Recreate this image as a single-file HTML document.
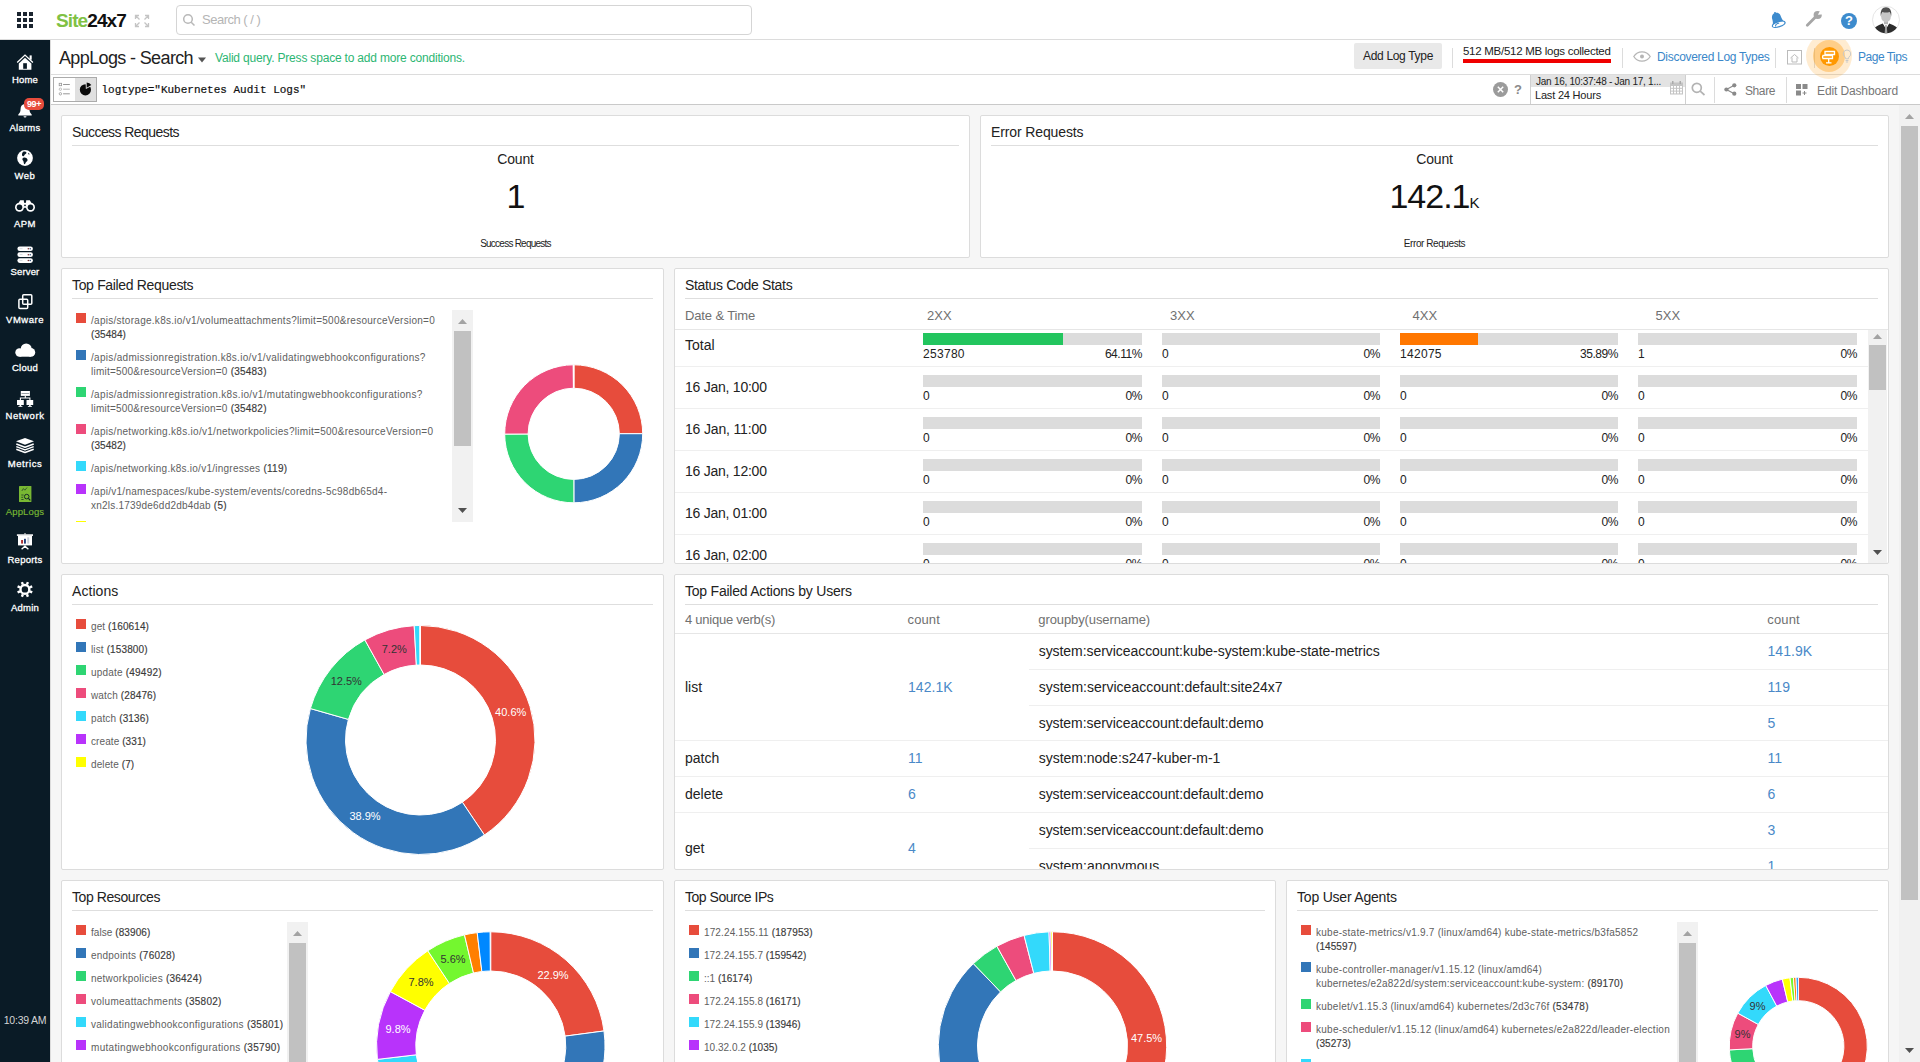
<!DOCTYPE html>
<html lang="en"><head><meta charset="utf-8"><title>AppLogs - Search</title>
<style>
html,body{margin:0;padding:0}
body{width:1920px;height:1062px;overflow:hidden;position:relative;background:#f6f6f6;font-family:'Liberation Sans', sans-serif;color:#333}
.t{position:absolute;white-space:nowrap}
.b{position:absolute}
.panel{position:absolute;background:#fff;border:1px solid #dcdcdc;border-radius:2px;box-sizing:border-box;overflow:hidden}
.panel .hd{position:absolute;left:10px;right:10px;top:29px;height:1px;background:#dedede}
svg{position:absolute;overflow:visible}
svg text{font-family:'Liberation Sans', sans-serif}
.lg{position:absolute;font-size:10px;line-height:14px;color:#606060;letter-spacing:0.3px}
.lg b{font-weight:normal;color:#3a3a3a;-webkit-text-stroke:0.15px #3a3a3a}
.sw{position:absolute;width:10px;height:10px}
</style></head><body>

<div class="b" style="left:0;top:0;width:1920px;height:39px;background:#fff;border-bottom:1px solid #dcdcdc"></div>
<svg width="60" height="40" style="left:0;top:0"><rect x="17" y="12" width="4" height="4" fill="#1b2530"/><rect x="23" y="12" width="4" height="4" fill="#1b2530"/><rect x="29" y="12" width="4" height="4" fill="#1b2530"/><rect x="17" y="18" width="4" height="4" fill="#1b2530"/><rect x="23" y="18" width="4" height="4" fill="#1b2530"/><rect x="29" y="18" width="4" height="4" fill="#1b2530"/><rect x="17" y="24" width="4" height="4" fill="#1b2530"/><rect x="23" y="24" width="4" height="4" fill="#1b2530"/><rect x="29" y="24" width="4" height="4" fill="#1b2530"/></svg>
<div class="t" style="left:56px;top:9px;font-size:19px;line-height:24px;color:#333;letter-spacing:-0.9px;font-weight:bold;"><span style="color:#80c144">Site</span><span style="color:#111">24x7</span></div>
<svg width="16" height="14" style="left:134px;top:14px" viewBox="0 0 16 14" fill="none" stroke="#c4c4c4" stroke-width="1.3">
<path d="M1.5 5V1.5H5M1.5 1.5L5.5 5.5M11 1.5h3.5V5M14.5 1.5L10.5 5.5M1.5 9v3.5H5M1.5 12.5L5.5 8.5M11 12.5h3.5V9M14.5 12.5L10.5 8.5"/></svg>
<div class="b" style="left:176px;top:5px;width:574px;height:28px;border:1px solid #d5d5d5;border-radius:4px;background:#fff"></div>
<svg width="14" height="14" style="left:182px;top:13px" viewBox="0 0 14 14" fill="none" stroke="#b8b8b8" stroke-width="1.5"><circle cx="6" cy="6" r="4.3"/><path d="M9.2 9.2L12.5 12.5"/></svg>
<div class="t" style="left:202px;top:12px;font-size:13px;line-height:16px;color:#b5b5b5;letter-spacing:-0.5px;">Search ( / )</div>
<svg width="20" height="20" style="left:1769px;top:11px" viewBox="0 0 20 20">
<g transform="translate(9.700 13.300) rotate(-18) translate(0 -5.300)">
<circle cx="0" cy="-6.600" r="1" fill="#3d8bcd"/>
<path d="M-6.800 5.300C-5.200 3.300-4.500 1-4.500-1.800C-4.500-4.800-2.600-6.500 0-6.500C2.600-6.500 4.500-4.800 4.500-1.800C4.500 1 5.200 3.300 6.800 5.300z" fill="#3d8bcd"/>
<ellipse cx="0" cy="5.300" rx="6.600" ry="2.500" fill="#fff" stroke="#3d8bcd" stroke-width="1.200"/>
<path d="M-3.500 5.900c.3-1.300 2.300-1.900 3.900-1.500" fill="none" stroke="#3d8bcd" stroke-width="1.100" stroke-linecap="round"/>
</g></svg>
<svg width="20" height="18" style="left:1804px;top:10px" viewBox="0 0 20 18">
<path d="M3.300 15.300L12 6.600" stroke="#a6a6a6" stroke-width="2.800" stroke-linecap="round" fill="none"/>
<circle cx="13.700" cy="5" r="4.100" fill="#a6a6a6"/>
<path d="M13.900 4.800L16.700 -.4L20 4.200z" fill="#fff"/>
</svg>
<div class="b" style="left:1841px;top:13px;width:16px;height:16px;border-radius:50%;background:#3d8bcd"></div>
<div class="t" style="left:1841px;top:13px;font-size:13px;line-height:16px;color:#fff;width:16px;text-align:center;font-weight:bold;">?</div>
<svg width="28" height="28" style="left:1872px;top:6px" viewBox="0 0 28 28">
<defs><clipPath id="av"><circle cx="14" cy="13.750" r="13.400"/></clipPath></defs>
<circle cx="14" cy="13.750" r="13.500" fill="#fff" stroke="#dedede" stroke-width=".8"/>
<g clip-path="url(#av)">
<path d="M0 29C0 21.500 5.500 19.800 10.800 17.600L14 22.500L17.200 17.600C22.500 19.800 28 21.500 28 29z" fill="#2c2c2c"/>
<path d="M11.300 17.400L14 23L16.700 17.400z" fill="#fff"/>
<path d="M13.300 19h1.400l.7 9h-2.800z" fill="#9c9c9c"/>
<rect x="12" y="14" width="4" height="4.200" fill="#b4b4b4"/>
<ellipse cx="14" cy="10.300" rx="4.900" ry="6.100" fill="#c6c6c6"/>
<path d="M8.900 10.500C7.800 4.500 10.500 1.300 14 1.300s6.300 3.200 5.100 9.200c-.3-2.600-1-4.300-1.700-4.600-2.200.7-4.600.7-6.800 0-.7.300-1.400 2-1.700 4.600z" fill="#505050"/>
</g></svg>
<div class="b" style="left:0;top:40px;width:50px;height:1022px;background:#0a1b26"></div>
<svg width="30" height="22" viewBox="10 12 30 22" style="left:10px;top:52px"><path d="M17.2 22.500L25 15.100L32.900 22.500" stroke="#fff" stroke-width="1.300" fill="none"/><path d="M18.800 29.800V23.600L25 17.700L31.400 23.600V29.800z" fill="#fff"/><rect x="23.200" y="23.200" width="3.700" height="5.600" fill="#0a1b26"/><rect x="29.600" y="15.400" width="2.100" height="4.300" fill="#fff"/></svg>
<div class="t" style="left:0px;top:74px;font-size:9.5px;line-height:12px;color:#fff;letter-spacing:0.164px;width:50px;text-align:center;-webkit-text-stroke:0.3px #fff;">Home</div>
<svg width="30" height="22" viewBox="10 12 30 22" style="left:10px;top:100px"><path d="M25 16c-3 0-4.400 2.200-4.400 4.800 0 3.400-1.200 4.700-2.300 5.700v.9h13.400v-.9c-1.100-1-2.300-2.300-2.300-5.700 0-2.600-1.400-4.800-4.400-4.800z" fill="#fff"/><path d="M23.500 28.200a1.500 1.300 0 003 0z" fill="#fff"/></svg>
<div class="t" style="left:0px;top:122px;font-size:9.5px;line-height:12px;color:#fff;letter-spacing:0.24px;width:50px;text-align:center;-webkit-text-stroke:0.3px #fff;">Alarms</div>
<svg width="30" height="22" viewBox="10 12 30 22" style="left:10px;top:148px"><circle cx="25" cy="22" r="7.900" fill="#fff"/><path d="M23.200 15.800c1.300-.5 2.700-.1 3.200.8.400.9-.6 1.400-1.500 2-.8.600-.5 1.600-1.500 1.700-1 .1-1.500-.9-1.400-2 .1-1 .500-2.100 1.200-2.500zM24 21.500c1.400-.3 3.100.6 3.500 1.900.4 1.300-1 2-1.700 3.100-.5.800-.7 1.900-1.400 1.700-.7-.2-.6-1.600-.9-2.600-.3-1-1.300-1.400-1.100-2.500.1-.8.800-1.500 1.600-1.600z" fill="#0a1b26"/><path d="M28.300 16.800c.7.400 1.200 1 1.400 1.600l-1.500-.1z" fill="#0a1b26"/></svg>
<div class="t" style="left:0px;top:170px;font-size:9.5px;line-height:12px;color:#fff;letter-spacing:0.475px;width:50px;text-align:center;-webkit-text-stroke:0.3px #fff;">Web</div>
<svg width="30" height="22" viewBox="10 12 30 22" style="left:10px;top:196px"><path d="M17 21.500L20.200 16.300h3.600L24.300 22zM33 21.500L29.800 16.300h-3.600L25.700 22z" fill="#fff"/><rect x="23.300" y="18.800" width="3.400" height="5" fill="#fff"/><circle cx="19.500" cy="23.300" r="4.500" fill="#fff"/><circle cx="30.500" cy="23.300" r="4.500" fill="#fff"/><circle cx="19.500" cy="23.300" r="2.800" fill="#0a1b26"/><circle cx="30.500" cy="23.300" r="2.800" fill="#0a1b26"/><circle cx="25" cy="21.300" r=".9" fill="#0a1b26"/></svg>
<div class="t" style="left:0px;top:218px;font-size:9.5px;line-height:12px;color:#fff;letter-spacing:0.469px;width:50px;text-align:center;-webkit-text-stroke:0.3px #fff;">APM</div>
<svg width="30" height="22" viewBox="10 12 30 22" style="left:10px;top:244px"><rect x="17.400" y="14.4" width="15.500" height="4.700" rx="2.300" fill="#fff"/><rect x="19.500" y="16.4" width="3" height=".7" fill="#c8d0d6"/><circle cx="28.300" cy="16.75" r=".75" fill="#7a2a2a"/><circle cx="30.200" cy="16.75" r=".75" fill="#1c3f6e"/><rect x="17.400" y="20.3" width="15.500" height="4.700" rx="2.300" fill="#fff"/><rect x="19.500" y="22.3" width="3" height=".7" fill="#c8d0d6"/><circle cx="28.300" cy="22.650000000000002" r=".75" fill="#7a2a2a"/><circle cx="30.200" cy="22.650000000000002" r=".75" fill="#1c3f6e"/><rect x="17.400" y="26.2" width="15.500" height="4.700" rx="2.300" fill="#fff"/><rect x="19.500" y="28.2" width="3" height=".7" fill="#c8d0d6"/><circle cx="28.300" cy="28.55" r=".75" fill="#7a2a2a"/><circle cx="30.200" cy="28.55" r=".75" fill="#1c3f6e"/></svg>
<div class="t" style="left:0px;top:266px;font-size:9.5px;line-height:12px;color:#fff;letter-spacing:0.136px;width:50px;text-align:center;-webkit-text-stroke:0.3px #fff;">Server</div>
<svg width="30" height="22" viewBox="10 12 30 22" style="left:10px;top:292px"><rect x="22.700" y="14.800" width="9.100" height="9.400" rx="1" fill="none" stroke="#fff" stroke-width="1.500"/><rect x="18.900" y="19.200" width="8.800" height="9.200" rx="1" fill="none" stroke="#fff" stroke-width="1.500"/></svg>
<div class="t" style="left:0px;top:314px;font-size:9.5px;line-height:12px;color:#fff;letter-spacing:0.509px;width:50px;text-align:center;-webkit-text-stroke:0.3px #fff;">VMware</div>
<svg width="30" height="22" viewBox="10 12 30 22" style="left:10px;top:340px"><circle cx="26.200" cy="21" r="5.500" fill="#fff"/><circle cx="19.500" cy="24.500" r="4.200" fill="#fff"/><circle cx="30.900" cy="24.400" r="4.300" fill="#fff"/><rect x="19.500" y="22" width="11.400" height="6.700" fill="#fff"/></svg>
<div class="t" style="left:0px;top:362px;font-size:9.5px;line-height:12px;color:#fff;letter-spacing:0.234px;width:50px;text-align:center;-webkit-text-stroke:0.3px #fff;">Cloud</div>
<svg width="30" height="22" viewBox="10 12 30 22" style="left:10px;top:388px"><rect x="20.800" y="15" width="9.100" height="4.900" fill="#fff"/><rect x="21.500" y="17.100" width="7.700" height=".7" fill="#0a1b26" opacity=".6"/><path d="M25.300 19.900V22M20.400 24V22h9.500v2" stroke="#fff" stroke-width="1.100" fill="none"/><rect x="17" y="24" width="6.800" height="5" fill="#fff"/><rect x="26.500" y="24" width="6.700" height="5" fill="#fff"/><rect x="19.600" y="29" width="1.600" height="1.200" fill="#fff"/><rect x="29.100" y="29" width="1.600" height="1.200" fill="#fff"/><rect x="18.400" y="30.100" width="4" height=".8" fill="#fff"/><rect x="27.900" y="30.100" width="4" height=".8" fill="#fff"/></svg>
<div class="t" style="left:0px;top:410px;font-size:9.5px;line-height:12px;color:#fff;letter-spacing:0.594px;width:50px;text-align:center;-webkit-text-stroke:0.3px #fff;">Network</div>
<svg width="30" height="22" viewBox="10 12 30 22" style="left:10px;top:436px"><path d="M25 13.900L34 17.300L25 20.700L16 17.300z" fill="#fff"/><path d="M16.300 20L25 23.300L33.700 20M16.300 22.600L25 25.900L33.700 22.600M16.300 25.200L25 28.500L33.700 25.200" fill="none" stroke="#fff" stroke-width="1.500" stroke-linejoin="round"/></svg>
<div class="t" style="left:0px;top:458px;font-size:9.5px;line-height:12px;color:#fff;letter-spacing:0.554px;width:50px;text-align:center;-webkit-text-stroke:0.3px #fff;">Metrics</div>
<svg width="30" height="22" viewBox="10 12 30 22" style="left:10px;top:484px"><rect x="19" y="13.900" width="12.400" height="16.100" rx=".6" fill="#78b833"/><path d="M21.800 19l1.600-2.400 1.500 1.600 2.200-2.700" fill="none" stroke="#0a1b26" stroke-width=".7" opacity=".8"/><path d="M21.300 23h2.300M21.300 25.300h1.800M21.300 27.500h2.300" stroke="#0a1b26" stroke-width=".8" opacity=".8"/><circle cx="26.700" cy="24.600" r="2.300" fill="none" stroke="#0a1b26" stroke-width=".9"/><path d="M28.400 26.400l1.900 2" stroke="#0a1b26" stroke-width="1.100"/></svg>
<div class="t" style="left:0px;top:506px;font-size:9.5px;line-height:12px;color:#78b833;letter-spacing:0.126px;width:50px;text-align:center;-webkit-text-stroke:0.15px #78b833;">AppLogs</div>
<svg width="30" height="22" viewBox="10 12 30 22" style="left:10px;top:532px"><rect x="24.500" y="13" width="1" height="1.500" fill="#fff"/><rect x="16.900" y="14.300" width="16.100" height="1.600" fill="#fff"/><rect x="18" y="15.800" width="14" height="9.600" fill="#fff"/><rect x="21.100" y="20" width="1.900" height="3.600" fill="#b03030"/><rect x="24" y="18.800" width="1.900" height="4.800" fill="#24407a"/><rect x="27.300" y="17.300" width="1.900" height="6.300" fill="#c9ccd6"/><path d="M25 25.400v1.600M21.600 29.300l3.400-3 3.400 3" fill="none" stroke="#fff" stroke-width="1.400"/></svg>
<div class="t" style="left:0px;top:554px;font-size:9.5px;line-height:12px;color:#fff;letter-spacing:0.248px;width:50px;text-align:center;-webkit-text-stroke:0.3px #fff;">Reports</div>
<svg width="30" height="22" viewBox="10 12 30 22" style="left:10px;top:580px"><path d="M29.70 23.39L32.20 24.42" stroke="#fff" stroke-width="2.400"/><path d="M26.89 26.20L27.92 28.70" stroke="#fff" stroke-width="2.400"/><path d="M22.91 26.20L21.88 28.70" stroke="#fff" stroke-width="2.400"/><path d="M20.10 23.39L17.60 24.42" stroke="#fff" stroke-width="2.400"/><path d="M20.10 19.41L17.60 18.38" stroke="#fff" stroke-width="2.400"/><path d="M22.91 16.60L21.88 14.10" stroke="#fff" stroke-width="2.400"/><path d="M26.89 16.60L27.92 14.10" stroke="#fff" stroke-width="2.400"/><path d="M29.70 19.41L32.20 18.38" stroke="#fff" stroke-width="2.400"/><circle cx="24.900" cy="21.400" r="4.400" fill="none" stroke="#fff" stroke-width="2.400"/></svg>
<div class="t" style="left:0px;top:602px;font-size:9.5px;line-height:12px;color:#fff;letter-spacing:0.252px;width:50px;text-align:center;-webkit-text-stroke:0.3px #fff;">Admin</div>
<div class="b" style="left:24px;top:98px;width:20px;height:12px;border-radius:5px;background:#e74c3c"></div>
<div class="t" style="left:24px;top:98px;font-size:9px;line-height:12px;color:#fff;letter-spacing:-0.4px;width:20px;text-align:center;font-weight:bold;">99+</div>
<div class="t" style="left:0px;top:1014px;font-size:10.5px;line-height:13px;color:#d5d5d5;letter-spacing:-0.234px;width:50px;text-align:center;">10:39 AM</div>
<div class="b" style="left:50px;top:40px;width:1870px;height:34px;background:#fff;border-bottom:1px solid #dcdcdc"></div>
<div class="t" style="left:59px;top:47px;font-size:18px;line-height:22px;color:#222;letter-spacing:-0.631px;">AppLogs - Search</div>
<svg width="10" height="6" style="left:197px;top:57px" viewBox="0 0 10 6"><path d="M1 .5h8L5 5.500z" fill="#555"/></svg>
<div class="t" style="left:215px;top:51px;font-size:12px;line-height:15px;color:#2cb673;letter-spacing:-0.188px;">Valid query. Press space to add more conditions.</div>
<div class="b" style="left:1354px;top:43px;width:88px;height:26px;background:#e9e9e9;border-radius:2px"></div>
<div class="t" style="left:1354px;top:49px;font-size:12px;line-height:15px;color:#222;letter-spacing:-0.32px;width:88px;text-align:center;">Add Log Type</div>
<div class="b" style="left:1452px;top:48px;width:1px;height:20px;background:#dcdcdc;"></div>
<div class="t" style="left:1463px;top:44px;font-size:11.5px;line-height:15px;color:#222;letter-spacing:-0.277px;">512 MB/512 MB logs collected</div>
<div class="b" style="left:1463px;top:59px;width:148px;height:4px;background:#f00000;"></div>
<div class="b" style="left:1622px;top:48px;width:1px;height:20px;background:#dcdcdc;"></div>
<svg width="18" height="11" style="left:1633px;top:51px" viewBox="0 0 18 11" fill="none" stroke="#b5b5b5" stroke-width="1.300"><path d="M.8 5.500C3 2 6 .8 9 .8s6 1.200 8.200 4.700C15 9 12 10.200 9 10.200S3 9 .8 5.500z"/><circle cx="9" cy="5.500" r="2" fill="#b5b5b5" stroke="none"/></svg>
<div class="t" style="left:1657px;top:50px;font-size:12px;line-height:15px;color:#3a87c9;letter-spacing:-0.301px;">Discovered Log Types</div>
<div class="b" style="left:1775px;top:48px;width:1px;height:20px;background:#dcdcdc;"></div>
<svg width="15" height="15" style="left:1787px;top:50px" viewBox="0 0 15 15" fill="none" stroke="#bbb" stroke-width="1"><rect x=".5" y=".5" width="14" height="13.500"/><path d="M3.500 8L7.500 4.500 11.500 8M5 7.500V12h5V7.500"/></svg>
<div class="b" style="left:1814px;top:48px;width:1px;height:20px;background:#dcdcdc;"></div>
<div class="b" style="left:1800px;top:40px;width:60px;height:50px;overflow:hidden;z-index:5"><div class="b" style="left:6px;top:-7px;width:46px;height:46px;border-radius:50%;background:rgba(255,152,0,.18)"></div><div class="b" style="left:13px;top:0px;width:32px;height:32px;border-radius:50%;background:rgba(255,152,0,.35)"></div><div class="b" style="left:19.500px;top:6.500px;width:19px;height:19px;border-radius:50%;background:#ff9800"></div></div>
<svg width="14" height="14" style="left:1822px;top:50px;z-index:6" viewBox="0 0 14 14" fill="none" stroke="#fff" stroke-width="1.300"><path d="M3 1.500h9.500v3H3zM10.500 5.500H1l-.5 1.500.5 1.500h9.500zM6.700 9v3.500M4 12.800h5.500"/></svg>
<svg width="10" height="15" style="left:1842px;top:49px;z-index:6" viewBox="0 0 10 15" fill="none" stroke="#c9c9c9" stroke-width="1"><path d="M5 1a3.800 3.800 0 00-2 7c.4.400.6 1 .6 1.800h2.800c0-.8.200-1.400.6-1.800A3.800 3.800 0 005 1zM3.600 11.500h2.800M3.900 13h2.200"/></svg>
<div class="t" style="left:1858px;top:50px;font-size:12px;line-height:15px;color:#3a87c9;letter-spacing:-0.486px;">Page Tips</div>
<div class="b" style="left:50px;top:75px;width:1870px;height:29px;background:#fff;border-bottom:1px solid #c9c9c9"></div>
<div class="b" style="left:53px;top:77px;width:44px;height:25px;border:1px solid #ababab;box-sizing:border-box;background:#fff"></div>
<div class="b" style="left:75px;top:78px;width:21px;height:23px;background:#e0e0e0"></div>
<svg width="13" height="14" style="left:58px;top:82px" viewBox="0 0 13 14" fill="none" stroke="#979797" stroke-width="1"><path d="M5.100 2.500h6.700M5.100 11.800h6.700"/><path d="M5.100 7.200h6.700" stroke="#b5b5b5"/><rect x="1.200" y="1.300" width="2.400" height="2.400" stroke-width=".8"/><circle cx="2.400" cy="7.200" r="1.200" stroke-width=".8" stroke="#b0b0b0"/><circle cx="2.400" cy="11.800" r="1.200" stroke-width=".8"/></svg>
<svg width="16" height="16" style="left:78px;top:82px" viewBox="0 0 16 16"><circle cx="7.400" cy="7.800" r="5.600" fill="#0a0a0a"/><path d="M7.900 7L7.530 0H14.500L14.140 3.820z" fill="#e0e0e0"/><path d="M8.700 5.750L8.700 .45A5.300 5.300 0 0 1 13.290 3.100z" fill="#0a0a0a"/></svg>
<div class="t" style="left:101.5px;top:83px;font-size:11px;line-height:14px;color:#111;font-family:'Liberation Mono',monospace;-webkit-text-stroke:0.2px #111;">logtype="Kubernetes Audit Logs"</div>
<div class="b" style="left:1493px;top:82px;width:15px;height:15px;border-radius:50%;background:#9b9b9b"></div>
<svg width="15" height="15" style="left:1493px;top:82px" viewBox="0 0 15 15" stroke="#fff" stroke-width="1.500"><path d="M4.800 4.800l5.400 5.400M10.200 4.800l-5.400 5.400"/></svg>
<div class="t" style="left:1514px;top:81px;font-size:13px;line-height:17px;color:#8a8a8a;font-weight:bold;">?</div>
<div class="b" style="left:1530px;top:75px;width:156px;height:29px;border-left:1px solid #d0d0d0;border-right:1px solid #d0d0d0;box-sizing:border-box;background:#fff"></div>
<div class="b" style="left:1531px;top:75px;width:154px;height:12px;background:#e3e3e3;"></div>
<div class="t" style="left:1536px;top:76px;font-size:10px;line-height:12px;color:#222;letter-spacing:-0.254px;">Jan 16, 10:37:48 - Jan 17, 1...</div>
<div class="t" style="left:1535px;top:88px;font-size:11px;line-height:14px;color:#222;letter-spacing:-0.191px;">Last 24 Hours</div>
<svg width="13" height="14" style="left:1670px;top:81px" viewBox="0 0 13 14"><rect x="0" y="1.500" width="13" height="12" fill="#c4c4c4"/><rect x="2" y="0" width="1.500" height="3" fill="#aaa"/><rect x="9.500" y="0" width="1.500" height="3" fill="#aaa"/><rect x="1" y="5.0" width="2" height="1.800" fill="#fff"/><rect x="4" y="5.0" width="2" height="1.800" fill="#fff"/><rect x="7" y="5.0" width="2" height="1.800" fill="#fff"/><rect x="10" y="5.0" width="2" height="1.800" fill="#fff"/><rect x="1" y="7.8" width="2" height="1.800" fill="#fff"/><rect x="4" y="7.8" width="2" height="1.800" fill="#fff"/><rect x="7" y="7.8" width="2" height="1.800" fill="#fff"/><rect x="10" y="7.8" width="2" height="1.800" fill="#fff"/><rect x="1" y="10.6" width="2" height="1.800" fill="#fff"/><rect x="4" y="10.6" width="2" height="1.800" fill="#fff"/><rect x="7" y="10.6" width="2" height="1.800" fill="#fff"/><rect x="10" y="10.6" width="2" height="1.800" fill="#fff"/></svg>
<svg width="15" height="14" style="left:1691px;top:82px" viewBox="0 0 15 14" fill="none" stroke="#b3b3b3" stroke-width="1.700"><circle cx="5.800" cy="5.800" r="4.500"/><path d="M9.200 9.200L13.500 13"/></svg>
<div class="b" style="left:1714px;top:77px;width:1px;height:26px;background:#dcdcdc;"></div>
<svg width="13" height="13" style="left:1724px;top:83px" viewBox="0 0 13 13" fill="#8a8a8a"><circle cx="10.300" cy="2.300" r="2.100"/><circle cx="2.400" cy="6.500" r="2.100"/><circle cx="10.300" cy="10.700" r="2.100"/><path d="M2.400 6.500L10.300 2.300M2.400 6.500l7.900 4.200" stroke="#8a8a8a" stroke-width="1.200"/></svg>
<div class="t" style="left:1745px;top:84px;font-size:12px;line-height:15px;color:#777;letter-spacing:-0.406px;">Share</div>
<div class="b" style="left:1786px;top:77px;width:1px;height:26px;background:#dcdcdc;"></div>
<svg width="12" height="12" style="left:1796px;top:84px" viewBox="0 0 12 12" fill="#8a8a8a"><rect x="0" y="0" width="5" height="5"/><rect x="6.500" y="0" width="5" height="5"/><rect x="0" y="6.500" width="5" height="5"/><path d="M8.500 7v4M6.500 9h4" stroke="#8a8a8a" stroke-width="1"/></svg>
<div class="t" style="left:1817px;top:84px;font-size:12px;line-height:15px;color:#777;letter-spacing:-0.123px;">Edit Dashboard</div>
<div class="b" style="left:50px;top:40px;width:1px;height:1022px;background:#dcdcdc;z-index:3;"></div>
<div class="b" style="left:1899px;top:105px;width:21px;height:957px;background:#f1f1f1;"></div>
<svg width="9" height="5" style="left:1905px;top:114px" viewBox="0 0 9 5"><path d="M4.500 0L9 5H0z" fill="#a3a3a3"/></svg>
<div class="b" style="left:1901px;top:126px;width:17px;height:774px;background:#c1c1c1;"></div>
<svg width="9" height="5" style="left:1905px;top:1048px" viewBox="0 0 9 5"><path d="M0 0h9L4.500 5z" fill="#505050"/></svg>
<div class="panel" style="left:61px;top:115px;width:909px;height:143px">
<div class="t" style="left:10px;top:7px;font-size:14px;line-height:18px;color:#222;letter-spacing:-0.56px">Success Requests</div><div class="hd"></div>
<div class="t" style="left:0;width:907px;text-align:center;top:34px;font-size:14px;line-height:18px;color:#222;letter-spacing:-0.2px">Count</div>
<div class="t" style="left:0;width:907px;text-align:center;top:58px;font-size:34px;line-height:44px;color:#111;letter-spacing:-1px">1<span style="font-size:15px;letter-spacing:0"></span></div>
<div class="t" style="left:0;width:907px;text-align:center;top:122px;font-size:10px;line-height:12px;color:#222;letter-spacing:-0.758px">Success Requests</div>
</div>
<div class="panel" style="left:980px;top:115px;width:909px;height:143px">
<div class="t" style="left:10px;top:7px;font-size:14px;line-height:18px;color:#222;letter-spacing:-0.125px">Error Requests</div><div class="hd"></div>
<div class="t" style="left:0;width:907px;text-align:center;top:34px;font-size:14px;line-height:18px;color:#222;letter-spacing:-0.2px">Count</div>
<div class="t" style="left:0;width:907px;text-align:center;top:58px;font-size:34px;line-height:44px;color:#111;letter-spacing:-1px">142.1<span style="font-size:15px;letter-spacing:0">K</span></div>
<div class="t" style="left:0;width:907px;text-align:center;top:122px;font-size:10px;line-height:12px;color:#222;letter-spacing:-0.425px">Error Requests</div>
</div>
<div class="panel" style="left:61px;top:268px;width:603px;height:296px">
<div class="t" style="left:10px;top:7px;font-size:14px;line-height:18px;color:#222;letter-spacing:-0.334px">Top Failed Requests</div><div class="hd"></div>
<div class="sw" style="left:14px;top:44px;background:#e74c3c"></div>
<div class="lg" style="left:29px;top:45px;width:360px;white-space:nowrap"><span style="letter-spacing:0.273px">/apis/storage.k8s.io/v1/volumeattachments?limit=500&amp;resourceVersion=0</span><br><span style="letter-spacing:0.076px"><b>(35484)</b></span></div>
<div class="sw" style="left:14px;top:81px;background:#3276b8"></div>
<div class="lg" style="left:29px;top:82px;width:360px;white-space:nowrap"><span style="letter-spacing:0.303px">/apis/admissionregistration.k8s.io/v1/validatingwebhookconfigurations?</span><br><span style="letter-spacing:0.223px">limit=500&amp;resourceVersion=0 <b>(35483)</b></span></div>
<div class="sw" style="left:14px;top:118px;background:#2ed573"></div>
<div class="lg" style="left:29px;top:119px;width:360px;white-space:nowrap"><span style="letter-spacing:0.325px">/apis/admissionregistration.k8s.io/v1/mutatingwebhookconfigurations?</span><br><span style="letter-spacing:0.223px">limit=500&amp;resourceVersion=0 <b>(35482)</b></span></div>
<div class="sw" style="left:14px;top:155px;background:#ed4c7c"></div>
<div class="lg" style="left:29px;top:156px;width:360px;white-space:nowrap"><span style="letter-spacing:0.292px">/apis/networking.k8s.io/v1/networkpolicies?limit=500&amp;resourceVersion=0</span><br><span style="letter-spacing:0.076px"><b>(35482)</b></span></div>
<div class="sw" style="left:14px;top:192px;background:#33d9fb"></div>
<div class="lg" style="left:29px;top:193px;width:360px;white-space:nowrap"><span style="letter-spacing:0.258px">/apis/networking.k8s.io/v1/ingresses <b>(119)</b></span></div>
<div class="sw" style="left:14px;top:215px;background:#b833fb"></div>
<div class="lg" style="left:29px;top:216px;width:360px;white-space:nowrap"><span style="letter-spacing:0.273px">/api/v1/namespaces/kube-system/events/coredns-5c98db65d4-</span><br><span style="letter-spacing:0.215px">xn2ls.1739de6dd2db4dab <b>(5)</b></span></div>
<div class="b" style="left:14px;top:252px;width:10px;height:1px;background:#ffff00"></div>
<div class="b" style="left:390px;top:41px;width:21px;height:212px;background:#f1f1f1"></div>
<svg width="9" height="5" style="left:396px;top:50px" viewBox="0 0 9 5"><path d="M4.500 0L9 5H0z" fill="#a3a3a3"/></svg>
<div class="b" style="left:392px;top:62px;width:17px;height:115px;background:#c1c1c1"></div>
<svg width="9" height="5" style="left:396px;top:239px" viewBox="0 0 9 5"><path d="M0 0h9L4.500 5z" fill="#505050"/></svg>
<svg width="603" height="296" style="left:0;top:0"><path d="M511.70 95.80A69 69 0 0 1 580.70 164.71L557.30 164.74A45.6 45.6 0 0 0 511.70 119.20Z" fill="#e74c3c" stroke="#fff" stroke-width="1" stroke-linejoin="round"/><path d="M580.70 164.71A69 69 0 0 1 511.89 233.80L511.83 210.40A45.6 45.6 0 0 0 557.30 164.74Z" fill="#3276b8" stroke="#fff" stroke-width="1" stroke-linejoin="round"/><path d="M511.89 233.80A69 69 0 0 1 442.70 165.09L466.10 164.99A45.6 45.6 0 0 0 511.83 210.40Z" fill="#2ed573" stroke="#fff" stroke-width="1" stroke-linejoin="round"/><path d="M442.70 165.09A69 69 0 0 1 511.31 95.80L511.44 119.20A45.6 45.6 0 0 0 466.10 164.99Z" fill="#ed4c7c" stroke="#fff" stroke-width="1" stroke-linejoin="round"/><path d="M511.31 95.80A69 69 0 0 1 511.68 95.80L511.68 119.20A45.6 45.6 0 0 0 511.44 119.20Z" fill="#33d9fb" stroke="#fff" stroke-width="1" stroke-linejoin="round"/><path d="M511.68 95.80A69 69 0 0 1 511.69 95.80L511.69 119.20A45.6 45.6 0 0 0 511.68 119.20Z" fill="#b833fb" stroke="#fff" stroke-width="1" stroke-linejoin="round"/><path d="M511.69 95.80A69 69 0 0 1 511.70 95.80L511.70 119.20A45.6 45.6 0 0 0 511.69 119.20Z" fill="#ffff00" stroke="#fff" stroke-width="1" stroke-linejoin="round"/></svg>
</div>
<div class="panel" style="left:674px;top:268px;width:1215px;height:296px">
<div class="t" style="left:10px;top:7px;font-size:14px;line-height:18px;color:#222;letter-spacing:-0.326px">Status Code Stats</div><div class="hd"></div>
<div class="t" style="left:10px;top:39px;font-size:13px;line-height:16px;color:#707070;letter-spacing:-0.139px">Date &amp; Time</div>
<div class="t" style="left:252px;top:39px;font-size:13px;line-height:16px;color:#707070;letter-spacing:0.041px">2XX</div>
<div class="t" style="left:495px;top:39px;font-size:13px;line-height:16px;color:#707070;letter-spacing:0.041px">3XX</div>
<div class="t" style="left:737.5px;top:39px;font-size:13px;line-height:16px;color:#707070;letter-spacing:0.041px">4XX</div>
<div class="t" style="left:980.5px;top:39px;font-size:13px;line-height:16px;color:#707070;letter-spacing:0.041px">5XX</div>
<div class="b" style="left:0;top:60px;width:1213px;height:1px;background:#e6e6e6"></div>
<div class="t" style="left:10px;top:67px;font-size:14px;line-height:18px;color:#222;letter-spacing:0.024px">Total</div>
<div class="b" style="left:248px;top:64.30000000000001px;width:219px;height:11.500px;background:#dcdcdc"></div>
<div class="b" style="left:248px;top:64.30000000000001px;width:140px;height:11.500px;background:#22c55e"></div>
<div class="t" style="left:248px;top:78px;font-size:12px;line-height:14px;color:#222;letter-spacing:0.3px">253780</div>
<div class="t" style="left:248px;top:78px;width:219px;text-align:right;font-size:12px;line-height:14px;color:#222;letter-spacing:-0.45px">64.11%</div>
<div class="b" style="left:487px;top:64.30000000000001px;width:218px;height:11.500px;background:#dcdcdc"></div>
<div class="t" style="left:487px;top:78px;font-size:12px;line-height:14px;color:#222;letter-spacing:0.3px">0</div>
<div class="t" style="left:487px;top:78px;width:218px;text-align:right;font-size:12px;line-height:14px;color:#222;letter-spacing:-0.45px">0%</div>
<div class="b" style="left:725px;top:64.30000000000001px;width:218px;height:11.500px;background:#dcdcdc"></div>
<div class="b" style="left:725px;top:64.30000000000001px;width:78px;height:11.500px;background:#ff7700"></div>
<div class="t" style="left:725px;top:78px;font-size:12px;line-height:14px;color:#222;letter-spacing:0.3px">142075</div>
<div class="t" style="left:725px;top:78px;width:218px;text-align:right;font-size:12px;line-height:14px;color:#222;letter-spacing:-0.45px">35.89%</div>
<div class="b" style="left:963px;top:64.30000000000001px;width:219px;height:11.500px;background:#dcdcdc"></div>
<div class="t" style="left:963px;top:78px;font-size:12px;line-height:14px;color:#222;letter-spacing:0.3px">1</div>
<div class="t" style="left:963px;top:78px;width:219px;text-align:right;font-size:12px;line-height:14px;color:#222;letter-spacing:-0.45px">0%</div>
<div class="b" style="left:0;top:97px;width:1193px;height:1px;background:#efefef"></div>
<div class="t" style="left:10px;top:109px;font-size:14px;line-height:18px;color:#222;letter-spacing:-0.243px">16 Jan, 10:00</div>
<div class="b" style="left:248px;top:106.30000000000001px;width:219px;height:11.500px;background:#dcdcdc"></div>
<div class="t" style="left:248px;top:120px;font-size:12px;line-height:14px;color:#222;letter-spacing:0.3px">0</div>
<div class="t" style="left:248px;top:120px;width:219px;text-align:right;font-size:12px;line-height:14px;color:#222;letter-spacing:-0.45px">0%</div>
<div class="b" style="left:487px;top:106.30000000000001px;width:218px;height:11.500px;background:#dcdcdc"></div>
<div class="t" style="left:487px;top:120px;font-size:12px;line-height:14px;color:#222;letter-spacing:0.3px">0</div>
<div class="t" style="left:487px;top:120px;width:218px;text-align:right;font-size:12px;line-height:14px;color:#222;letter-spacing:-0.45px">0%</div>
<div class="b" style="left:725px;top:106.30000000000001px;width:218px;height:11.500px;background:#dcdcdc"></div>
<div class="t" style="left:725px;top:120px;font-size:12px;line-height:14px;color:#222;letter-spacing:0.3px">0</div>
<div class="t" style="left:725px;top:120px;width:218px;text-align:right;font-size:12px;line-height:14px;color:#222;letter-spacing:-0.45px">0%</div>
<div class="b" style="left:963px;top:106.30000000000001px;width:219px;height:11.500px;background:#dcdcdc"></div>
<div class="t" style="left:963px;top:120px;font-size:12px;line-height:14px;color:#222;letter-spacing:0.3px">0</div>
<div class="t" style="left:963px;top:120px;width:219px;text-align:right;font-size:12px;line-height:14px;color:#222;letter-spacing:-0.45px">0%</div>
<div class="b" style="left:0;top:139px;width:1193px;height:1px;background:#efefef"></div>
<div class="t" style="left:10px;top:151px;font-size:14px;line-height:18px;color:#222;letter-spacing:-0.162px">16 Jan, 11:00</div>
<div class="b" style="left:248px;top:148.3px;width:219px;height:11.500px;background:#dcdcdc"></div>
<div class="t" style="left:248px;top:162px;font-size:12px;line-height:14px;color:#222;letter-spacing:0.3px">0</div>
<div class="t" style="left:248px;top:162px;width:219px;text-align:right;font-size:12px;line-height:14px;color:#222;letter-spacing:-0.45px">0%</div>
<div class="b" style="left:487px;top:148.3px;width:218px;height:11.500px;background:#dcdcdc"></div>
<div class="t" style="left:487px;top:162px;font-size:12px;line-height:14px;color:#222;letter-spacing:0.3px">0</div>
<div class="t" style="left:487px;top:162px;width:218px;text-align:right;font-size:12px;line-height:14px;color:#222;letter-spacing:-0.45px">0%</div>
<div class="b" style="left:725px;top:148.3px;width:218px;height:11.500px;background:#dcdcdc"></div>
<div class="t" style="left:725px;top:162px;font-size:12px;line-height:14px;color:#222;letter-spacing:0.3px">0</div>
<div class="t" style="left:725px;top:162px;width:218px;text-align:right;font-size:12px;line-height:14px;color:#222;letter-spacing:-0.45px">0%</div>
<div class="b" style="left:963px;top:148.3px;width:219px;height:11.500px;background:#dcdcdc"></div>
<div class="t" style="left:963px;top:162px;font-size:12px;line-height:14px;color:#222;letter-spacing:0.3px">0</div>
<div class="t" style="left:963px;top:162px;width:219px;text-align:right;font-size:12px;line-height:14px;color:#222;letter-spacing:-0.45px">0%</div>
<div class="b" style="left:0;top:181px;width:1193px;height:1px;background:#efefef"></div>
<div class="t" style="left:10px;top:193px;font-size:14px;line-height:18px;color:#222;letter-spacing:-0.243px">16 Jan, 12:00</div>
<div class="b" style="left:248px;top:190.3px;width:219px;height:11.500px;background:#dcdcdc"></div>
<div class="t" style="left:248px;top:204px;font-size:12px;line-height:14px;color:#222;letter-spacing:0.3px">0</div>
<div class="t" style="left:248px;top:204px;width:219px;text-align:right;font-size:12px;line-height:14px;color:#222;letter-spacing:-0.45px">0%</div>
<div class="b" style="left:487px;top:190.3px;width:218px;height:11.500px;background:#dcdcdc"></div>
<div class="t" style="left:487px;top:204px;font-size:12px;line-height:14px;color:#222;letter-spacing:0.3px">0</div>
<div class="t" style="left:487px;top:204px;width:218px;text-align:right;font-size:12px;line-height:14px;color:#222;letter-spacing:-0.45px">0%</div>
<div class="b" style="left:725px;top:190.3px;width:218px;height:11.500px;background:#dcdcdc"></div>
<div class="t" style="left:725px;top:204px;font-size:12px;line-height:14px;color:#222;letter-spacing:0.3px">0</div>
<div class="t" style="left:725px;top:204px;width:218px;text-align:right;font-size:12px;line-height:14px;color:#222;letter-spacing:-0.45px">0%</div>
<div class="b" style="left:963px;top:190.3px;width:219px;height:11.500px;background:#dcdcdc"></div>
<div class="t" style="left:963px;top:204px;font-size:12px;line-height:14px;color:#222;letter-spacing:0.3px">0</div>
<div class="t" style="left:963px;top:204px;width:219px;text-align:right;font-size:12px;line-height:14px;color:#222;letter-spacing:-0.45px">0%</div>
<div class="b" style="left:0;top:223px;width:1193px;height:1px;background:#efefef"></div>
<div class="t" style="left:10px;top:235px;font-size:14px;line-height:18px;color:#222;letter-spacing:-0.243px">16 Jan, 01:00</div>
<div class="b" style="left:248px;top:232.3px;width:219px;height:11.500px;background:#dcdcdc"></div>
<div class="t" style="left:248px;top:246px;font-size:12px;line-height:14px;color:#222;letter-spacing:0.3px">0</div>
<div class="t" style="left:248px;top:246px;width:219px;text-align:right;font-size:12px;line-height:14px;color:#222;letter-spacing:-0.45px">0%</div>
<div class="b" style="left:487px;top:232.3px;width:218px;height:11.500px;background:#dcdcdc"></div>
<div class="t" style="left:487px;top:246px;font-size:12px;line-height:14px;color:#222;letter-spacing:0.3px">0</div>
<div class="t" style="left:487px;top:246px;width:218px;text-align:right;font-size:12px;line-height:14px;color:#222;letter-spacing:-0.45px">0%</div>
<div class="b" style="left:725px;top:232.3px;width:218px;height:11.500px;background:#dcdcdc"></div>
<div class="t" style="left:725px;top:246px;font-size:12px;line-height:14px;color:#222;letter-spacing:0.3px">0</div>
<div class="t" style="left:725px;top:246px;width:218px;text-align:right;font-size:12px;line-height:14px;color:#222;letter-spacing:-0.45px">0%</div>
<div class="b" style="left:963px;top:232.3px;width:219px;height:11.500px;background:#dcdcdc"></div>
<div class="t" style="left:963px;top:246px;font-size:12px;line-height:14px;color:#222;letter-spacing:0.3px">0</div>
<div class="t" style="left:963px;top:246px;width:219px;text-align:right;font-size:12px;line-height:14px;color:#222;letter-spacing:-0.45px">0%</div>
<div class="b" style="left:0;top:265px;width:1193px;height:1px;background:#efefef"></div>
<div class="t" style="left:10px;top:277px;font-size:14px;line-height:18px;color:#222;letter-spacing:-0.243px">16 Jan, 02:00</div>
<div class="b" style="left:248px;top:274.29999999999995px;width:219px;height:11.500px;background:#dcdcdc"></div>
<div class="t" style="left:248px;top:288px;font-size:12px;line-height:14px;color:#222;letter-spacing:0.3px">0</div>
<div class="t" style="left:248px;top:288px;width:219px;text-align:right;font-size:12px;line-height:14px;color:#222;letter-spacing:-0.45px">0%</div>
<div class="b" style="left:487px;top:274.29999999999995px;width:218px;height:11.500px;background:#dcdcdc"></div>
<div class="t" style="left:487px;top:288px;font-size:12px;line-height:14px;color:#222;letter-spacing:0.3px">0</div>
<div class="t" style="left:487px;top:288px;width:218px;text-align:right;font-size:12px;line-height:14px;color:#222;letter-spacing:-0.45px">0%</div>
<div class="b" style="left:725px;top:274.29999999999995px;width:218px;height:11.500px;background:#dcdcdc"></div>
<div class="t" style="left:725px;top:288px;font-size:12px;line-height:14px;color:#222;letter-spacing:0.3px">0</div>
<div class="t" style="left:725px;top:288px;width:218px;text-align:right;font-size:12px;line-height:14px;color:#222;letter-spacing:-0.45px">0%</div>
<div class="b" style="left:963px;top:274.29999999999995px;width:219px;height:11.500px;background:#dcdcdc"></div>
<div class="t" style="left:963px;top:288px;font-size:12px;line-height:14px;color:#222;letter-spacing:0.3px">0</div>
<div class="t" style="left:963px;top:288px;width:219px;text-align:right;font-size:12px;line-height:14px;color:#222;letter-spacing:-0.45px">0%</div>
<div class="b" style="left:0;top:307px;width:1193px;height:1px;background:#efefef"></div>
<div class="b" style="left:1193px;top:61px;width:19px;height:234px;background:#f1f1f1"></div>
<svg width="9" height="5" style="left:1198px;top:65px" viewBox="0 0 9 5"><path d="M4.500 0L9 5H0z" fill="#a3a3a3"/></svg>
<div class="b" style="left:1194px;top:76px;width:17px;height:45px;background:#c1c1c1"></div>
<svg width="9" height="5" style="left:1198px;top:281px" viewBox="0 0 9 5"><path d="M0 0h9L4.500 5z" fill="#505050"/></svg>
</div>
<div class="panel" style="left:61px;top:574px;width:603px;height:296px">
<div class="t" style="left:10px;top:7px;font-size:14px;line-height:18px;color:#222;letter-spacing:0.054px">Actions</div><div class="hd"></div>
<div class="sw" style="left:14px;top:44px;background:#e74c3c"></div>
<div class="lg" style="left:29px;top:45px;width:200px;white-space:nowrap"><span style="letter-spacing:0.107px">get <b>(160614)</b></span></div>
<div class="sw" style="left:14px;top:67px;background:#3276b8"></div>
<div class="lg" style="left:29px;top:68px;width:200px;white-space:nowrap"><span style="letter-spacing:0.128px">list <b>(153800)</b></span></div>
<div class="sw" style="left:14px;top:90px;background:#2ed573"></div>
<div class="lg" style="left:29px;top:91px;width:200px;white-space:nowrap"><span style="letter-spacing:0.204px">update <b>(49492)</b></span></div>
<div class="sw" style="left:14px;top:113px;background:#ed4c7c"></div>
<div class="lg" style="left:29px;top:114px;width:200px;white-space:nowrap"><span style="letter-spacing:0.148px">watch <b>(28476)</b></span></div>
<div class="sw" style="left:14px;top:136px;background:#33d9fb"></div>
<div class="lg" style="left:29px;top:137px;width:200px;white-space:nowrap"><span style="letter-spacing:0.154px">patch <b>(3136)</b></span></div>
<div class="sw" style="left:14px;top:159px;background:#b833fb"></div>
<div class="lg" style="left:29px;top:160px;width:200px;white-space:nowrap"><span style="letter-spacing:0.09px">create <b>(331)</b></span></div>
<div class="sw" style="left:14px;top:182px;background:#ffff00"></div>
<div class="lg" style="left:29px;top:183px;width:200px;white-space:nowrap"><span style="letter-spacing:0.105px">delete <b>(7)</b></span></div>
<svg width="603" height="296" style="left:0;top:0"><path d="M358.50 50.50A114.5 114.5 0 0 1 422.42 260.00L400.37 227.23A75 75 0 0 0 358.50 90.00Z" fill="#e74c3c" stroke="#fff" stroke-width="1" stroke-linejoin="round"/><path d="M422.42 260.00A114.5 114.5 0 0 1 248.40 133.56L286.38 144.41A75 75 0 0 0 400.37 227.23Z" fill="#3276b8" stroke="#fff" stroke-width="1" stroke-linejoin="round"/><path d="M248.40 133.56A114.5 114.5 0 0 1 302.89 64.91L322.08 99.44A75 75 0 0 0 286.38 144.41Z" fill="#2ed573" stroke="#fff" stroke-width="1" stroke-linejoin="round"/><path d="M302.89 64.91A114.5 114.5 0 0 1 352.19 50.67L354.37 90.11A75 75 0 0 0 322.08 99.44Z" fill="#ed4c7c" stroke="#fff" stroke-width="1" stroke-linejoin="round"/><path d="M352.19 50.67A114.5 114.5 0 0 1 357.89 50.50L358.10 90.00A75 75 0 0 0 354.37 90.11Z" fill="#33d9fb" stroke="#fff" stroke-width="1" stroke-linejoin="round"/><path d="M357.89 50.50A114.5 114.5 0 0 1 358.49 50.50L358.49 90.00A75 75 0 0 0 358.10 90.00Z" fill="#b833fb" stroke="#fff" stroke-width="1" stroke-linejoin="round"/><path d="M358.49 50.50A114.5 114.5 0 0 1 358.50 50.50L358.50 90.00A75 75 0 0 0 358.49 90.00Z" fill="#ffff00" stroke="#fff" stroke-width="1" stroke-linejoin="round"/><text x="448.7" y="141" fill="#fff" font-size="11" text-anchor="middle" letter-spacing="0">40.6%</text><text x="303" y="245" fill="#fff" font-size="11" text-anchor="middle" letter-spacing="0">38.9%</text><text x="284.3" y="110" fill="#333" font-size="11" text-anchor="middle" letter-spacing="0">12.5%</text><text x="332.3" y="78" fill="#333" font-size="11" text-anchor="middle" letter-spacing="0">7.2%</text></svg>
</div>
<div class="panel" style="left:674px;top:574px;width:1215px;height:296px">
<div class="t" style="left:10px;top:7px;font-size:14px;line-height:18px;color:#222;letter-spacing:-0.224px">Top Failed Actions by Users</div><div class="hd"></div>
<div class="t" style="left:10px;top:37px;font-size:13px;line-height:16px;color:#707070;letter-spacing:-0.247px">4 unique verb(s)</div>
<div class="t" style="left:232.5px;top:37px;font-size:13px;line-height:16px;color:#707070;letter-spacing:0.138px">count</div>
<div class="t" style="left:363.29999999999995px;top:37px;font-size:13px;line-height:16px;color:#707070;letter-spacing:-0.103px">groupby(username)</div>
<div class="t" style="left:1092.3px;top:37px;font-size:13px;line-height:16px;color:#707070;letter-spacing:0.138px">count</div>
<div class="b" style="left:0;top:58px;width:1213px;height:1px;background:#e6e6e6"></div>
<div class="t" style="left:363.70000000000005px;top:66.5px;font-size:14px;line-height:18px;color:#222;letter-spacing:-0.056px">system:serviceaccount:kube-system:kube-state-metrics</div>
<div class="t" style="left:1092.5px;top:66.5px;font-size:14px;line-height:18px;color:#4a89c8;letter-spacing:0.05px">141.9K</div>
<div class="b" style="left:354px;top:94.0px;width:859px;height:1px;background:#efefef"></div>
<div class="t" style="left:363.70000000000005px;top:102.5px;font-size:14px;line-height:18px;color:#222;letter-spacing:0.011px">system:serviceaccount:default:site24x7</div>
<div class="t" style="left:1092.5px;top:102.5px;font-size:14px;line-height:18px;color:#4a89c8;letter-spacing:0.05px">119</div>
<div class="b" style="left:354px;top:130.0px;width:859px;height:1px;background:#efefef"></div>
<div class="t" style="left:363.70000000000005px;top:139.0px;font-size:14px;line-height:18px;color:#222;letter-spacing:-0.052px">system:serviceaccount:default:demo</div>
<div class="t" style="left:1092.5px;top:139.0px;font-size:14px;line-height:18px;color:#4a89c8;letter-spacing:0.05px">5</div>
<div class="b" style="left:0px;top:165.0px;width:1213px;height:1px;background:#efefef"></div>
<div class="t" style="left:10px;top:102.5px;font-size:14px;line-height:18px;color:#222;letter-spacing:0px">list</div>
<div class="t" style="left:233px;top:102.5px;font-size:14px;line-height:18px;color:#4a89c8;letter-spacing:0.05px">142.1K</div>
<div class="t" style="left:363.70000000000005px;top:173.5px;font-size:14px;line-height:18px;color:#222;letter-spacing:-0.015px">system:node:s247-kuber-m-1</div>
<div class="t" style="left:1092.5px;top:173.5px;font-size:14px;line-height:18px;color:#4a89c8;letter-spacing:0.05px">11</div>
<div class="b" style="left:0px;top:201.0px;width:1213px;height:1px;background:#efefef"></div>
<div class="t" style="left:10px;top:174.0px;font-size:14px;line-height:18px;color:#222;letter-spacing:0px">patch</div>
<div class="t" style="left:233px;top:174.0px;font-size:14px;line-height:18px;color:#4a89c8;letter-spacing:0.05px">11</div>
<div class="t" style="left:363.70000000000005px;top:209.5px;font-size:14px;line-height:18px;color:#222;letter-spacing:-0.052px">system:serviceaccount:default:demo</div>
<div class="t" style="left:1092.5px;top:209.5px;font-size:14px;line-height:18px;color:#4a89c8;letter-spacing:0.05px">6</div>
<div class="b" style="left:0px;top:237.0px;width:1213px;height:1px;background:#efefef"></div>
<div class="t" style="left:10px;top:210.0px;font-size:14px;line-height:18px;color:#222;letter-spacing:0px">delete</div>
<div class="t" style="left:233px;top:210.0px;font-size:14px;line-height:18px;color:#4a89c8;letter-spacing:0.05px">6</div>
<div class="t" style="left:363.70000000000005px;top:245.5px;font-size:14px;line-height:18px;color:#222;letter-spacing:-0.052px">system:serviceaccount:default:demo</div>
<div class="t" style="left:1092.5px;top:245.5px;font-size:14px;line-height:18px;color:#4a89c8;letter-spacing:0.05px">3</div>
<div class="b" style="left:354px;top:273.0px;width:859px;height:1px;background:#efefef"></div>
<div class="t" style="left:363.70000000000005px;top:281.5px;font-size:14px;line-height:18px;color:#222;letter-spacing:0px">system:anonymous</div>
<div class="t" style="left:1092.5px;top:281.5px;font-size:14px;line-height:18px;color:#4a89c8;letter-spacing:0.05px">1</div>
<div class="b" style="left:0px;top:309.0px;width:1213px;height:1px;background:#efefef"></div>
<div class="t" style="left:10px;top:264.0px;font-size:14px;line-height:18px;color:#222;letter-spacing:0px">get</div>
<div class="t" style="left:233px;top:264.0px;font-size:14px;line-height:18px;color:#4a89c8;letter-spacing:0.05px">4</div>
</div>
<div class="panel" style="left:61px;top:880px;width:603px;height:296px">
<div class="t" style="left:10px;top:7px;font-size:14px;line-height:18px;color:#222;letter-spacing:-0.415px">Top Resources</div><div class="hd"></div>
<div class="sw" style="left:14px;top:44px;background:#e74c3c"></div>
<div class="lg" style="left:29px;top:45px;width:215px;white-space:nowrap"><span style="letter-spacing:0.071px">false <b>(83906)</b></span></div>
<div class="sw" style="left:14px;top:67px;background:#3276b8"></div>
<div class="lg" style="left:29px;top:68px;width:215px;white-space:nowrap"><span style="letter-spacing:0.216px">endpoints <b>(76028)</b></span></div>
<div class="sw" style="left:14px;top:90px;background:#2ed573"></div>
<div class="lg" style="left:29px;top:91px;width:215px;white-space:nowrap"><span style="letter-spacing:0.234px">networkpolicies <b>(36424)</b></span></div>
<div class="sw" style="left:14px;top:113px;background:#ed4c7c"></div>
<div class="lg" style="left:29px;top:114px;width:215px;white-space:nowrap"><span style="letter-spacing:0.269px">volumeattachments <b>(35802)</b></span></div>
<div class="sw" style="left:14px;top:136px;background:#33d9fb"></div>
<div class="lg" style="left:29px;top:137px;width:215px;white-space:nowrap"><span style="letter-spacing:0.269px">validatingwebhookconfigurations <b>(35801)</b></span></div>
<div class="sw" style="left:14px;top:159px;background:#b833fb"></div>
<div class="lg" style="left:29px;top:160px;width:215px;white-space:nowrap"><span style="letter-spacing:0.308px">mutatingwebhookconfigurations <b>(35790)</b></span></div>
<div class="sw" style="left:14px;top:182px;background:#ffff00"></div>
<div class="lg" style="left:29px;top:183px;width:215px;white-space:nowrap">customresourcedefinitions <b>(28600)</b></div>
<div class="b" style="left:225px;top:41px;width:21px;height:212px;background:#f1f1f1"></div>
<svg width="9" height="5" style="left:231px;top:50px" viewBox="0 0 9 5"><path d="M4.500 0L9 5H0z" fill="#a3a3a3"/></svg>
<div class="b" style="left:227px;top:62px;width:17px;height:150px;background:#c1c1c1"></div>
<svg width="9" height="5" style="left:231px;top:239px" viewBox="0 0 9 5"><path d="M0 0h9L4.500 5z" fill="#505050"/></svg>
<svg width="603" height="296" style="left:0;top:0"><path d="M428.80 50.80A114.2 114.2 0 0 1 542.01 149.98L503.15 155.13A75 75 0 0 0 428.80 90.00Z" fill="#e74c3c" stroke="#fff" stroke-width="1" stroke-linejoin="round"/><path d="M542.01 149.98A114.2 114.2 0 0 1 473.16 270.23L457.94 234.11A75 75 0 0 0 503.15 155.13Z" fill="#3276b8" stroke="#fff" stroke-width="1" stroke-linejoin="round"/><path d="M473.16 270.23A114.2 114.2 0 0 1 403.26 276.31L412.03 238.10A75 75 0 0 0 457.94 234.11Z" fill="#2ed573" stroke="#fff" stroke-width="1" stroke-linejoin="round"/><path d="M403.26 276.31A114.2 114.2 0 0 1 343.80 241.27L372.98 215.09A75 75 0 0 0 412.03 238.10Z" fill="#ed4c7c" stroke="#fff" stroke-width="1" stroke-linejoin="round"/><path d="M343.80 241.27A114.2 114.2 0 0 1 315.39 178.39L354.32 173.79A75 75 0 0 0 372.98 215.09Z" fill="#33d9fb" stroke="#fff" stroke-width="1" stroke-linejoin="round"/><path d="M315.39 178.39A114.2 114.2 0 0 1 328.38 110.61L362.85 129.28A75 75 0 0 0 354.32 173.79Z" fill="#b833fb" stroke="#fff" stroke-width="1" stroke-linejoin="round"/><path d="M328.38 110.61A114.2 114.2 0 0 1 365.80 69.75L387.43 102.44A75 75 0 0 0 362.85 129.28Z" fill="#ffff00" stroke="#fff" stroke-width="1" stroke-linejoin="round"/><path d="M365.80 69.75A114.2 114.2 0 0 1 402.49 53.87L411.52 92.02A75 75 0 0 0 387.43 102.44Z" fill="#74f72f" stroke="#fff" stroke-width="1" stroke-linejoin="round"/><path d="M402.49 53.87A114.2 114.2 0 0 1 415.20 51.61L419.87 90.53A75 75 0 0 0 411.52 92.02Z" fill="#ff7f00" stroke="#fff" stroke-width="1" stroke-linejoin="round"/><path d="M415.20 51.61A114.2 114.2 0 0 1 428.08 50.80L428.33 90.00A75 75 0 0 0 419.87 90.53Z" fill="#0088ff" stroke="#fff" stroke-width="1" stroke-linejoin="round"/><text x="491" y="98" fill="#fff" font-size="11" text-anchor="middle" letter-spacing="0">22.9%</text><text x="391" y="82" fill="#333" font-size="11" text-anchor="middle" letter-spacing="0">5.6%</text><text x="359" y="105" fill="#333" font-size="11" text-anchor="middle" letter-spacing="0">7.8%</text><text x="336" y="152" fill="#fff" font-size="11" text-anchor="middle" letter-spacing="0">9.8%</text></svg>
</div>
<div class="panel" style="left:674px;top:880px;width:602px;height:296px">
<div class="t" style="left:10px;top:7px;font-size:14px;line-height:18px;color:#222;letter-spacing:-0.474px">Top Source IPs</div><div class="hd"></div>
<div class="sw" style="left:14px;top:44px;background:#e74c3c"></div>
<div class="lg" style="left:29px;top:45px;width:200px;white-space:nowrap"><span style="letter-spacing:0.122px">172.24.155.11 <b>(187953)</b></span></div>
<div class="sw" style="left:14px;top:67px;background:#3276b8"></div>
<div class="lg" style="left:29px;top:68px;width:200px;white-space:nowrap"><span style="letter-spacing:0.052px">172.24.155.7 <b>(159542)</b></span></div>
<div class="sw" style="left:14px;top:90px;background:#2ed573"></div>
<div class="lg" style="left:29px;top:91px;width:200px;white-space:nowrap"><span style="letter-spacing:-0.007px">::1 <b>(16174)</b></span></div>
<div class="sw" style="left:14px;top:113px;background:#ed4c7c"></div>
<div class="lg" style="left:29px;top:114px;width:200px;white-space:nowrap"><span style="letter-spacing:0.053px">172.24.155.8 <b>(16171)</b></span></div>
<div class="sw" style="left:14px;top:136px;background:#33d9fb"></div>
<div class="lg" style="left:29px;top:137px;width:200px;white-space:nowrap"><span style="letter-spacing:0.053px">172.24.155.9 <b>(13946)</b></span></div>
<div class="sw" style="left:14px;top:159px;background:#b833fb"></div>
<div class="lg" style="left:29px;top:160px;width:200px;white-space:nowrap"><span style="letter-spacing:0.019px">10.32.0.2 <b>(1035)</b></span></div>
<div class="sw" style="left:14px;top:182px;background:#ffff00"></div>
<div class="lg" style="left:29px;top:183px;width:200px;white-space:nowrap">10.32.0.3 <b>(869)</b></div>
<svg width="602" height="296" style="left:0;top:0"><path d="M377.50 50.80A114.2 114.2 0 0 1 395.36 277.79L389.23 239.08A75 75 0 0 0 377.50 90.00Z" fill="#e74c3c" stroke="#fff" stroke-width="1" stroke-linejoin="round"/><path d="M395.36 277.79A114.2 114.2 0 0 1 298.39 82.64L325.54 110.91A75 75 0 0 0 389.23 239.08Z" fill="#3276b8" stroke="#fff" stroke-width="1" stroke-linejoin="round"/><path d="M298.39 82.64A114.2 114.2 0 0 1 321.90 65.25L340.99 99.49A75 75 0 0 0 325.54 110.91Z" fill="#2ed573" stroke="#fff" stroke-width="1" stroke-linejoin="round"/><path d="M321.90 65.25A114.2 114.2 0 0 1 349.06 54.40L358.82 92.36A75 75 0 0 0 340.99 99.49Z" fill="#ed4c7c" stroke="#fff" stroke-width="1" stroke-linejoin="round"/><path d="M349.06 54.40A114.2 114.2 0 0 1 374.05 50.85L375.23 90.03A75 75 0 0 0 358.82 92.36Z" fill="#33d9fb" stroke="#fff" stroke-width="1" stroke-linejoin="round"/><path d="M374.05 50.85A114.2 114.2 0 0 1 375.92 50.81L376.47 90.01A75 75 0 0 0 375.23 90.03Z" fill="#b833fb" stroke="#fff" stroke-width="1" stroke-linejoin="round"/><path d="M375.92 50.81A114.2 114.2 0 0 1 377.50 50.80L377.50 90.00A75 75 0 0 0 376.47 90.01Z" fill="#ffff00" stroke="#fff" stroke-width="1" stroke-linejoin="round"/><text x="471.5" y="161" fill="#fff" font-size="11" text-anchor="middle" letter-spacing="0">47.5%</text></svg>
</div>
<div class="panel" style="left:1286px;top:880px;width:603px;height:296px">
<div class="t" style="left:10px;top:7px;font-size:14px;line-height:18px;color:#222;letter-spacing:-0.202px">Top User Agents</div><div class="hd"></div>
<div class="sw" style="left:14px;top:44px;background:#e74c3c"></div>
<div class="lg" style="left:29px;top:45px;width:370px;white-space:nowrap"><span style="letter-spacing:0.256px">kube-state-metrics/v1.9.7 (linux/amd64) kube-state-metrics/b3fa5852</span><br><span style="letter-spacing:0.084px"><b>(145597)</b></span></div>
<div class="sw" style="left:14px;top:81px;background:#3276b8"></div>
<div class="lg" style="left:29px;top:82px;width:370px;white-space:nowrap"><span style="letter-spacing:0.273px">kube-controller-manager/v1.15.12 (linux/amd64)</span><br><span style="letter-spacing:0.208px">kubernetes/e2a822d/system:serviceaccount:kube-system: <b>(89170)</b></span></div>
<div class="sw" style="left:14px;top:118px;background:#2ed573"></div>
<div class="lg" style="left:29px;top:119px;width:370px;white-space:nowrap"><span style="letter-spacing:0.244px">kubelet/v1.15.3 (linux/amd64) kubernetes/2d3c76f <b>(53478)</b></span></div>
<div class="sw" style="left:14px;top:141px;background:#ed4c7c"></div>
<div class="lg" style="left:29px;top:142px;width:370px;white-space:nowrap"><span style="letter-spacing:0.261px">kube-scheduler/v1.15.12 (linux/amd64) kubernetes/e2a822d/leader-election</span><br><span style="letter-spacing:0.076px"><b>(35273)</b></span></div>
<div class="sw" style="left:14px;top:178px;background:#33d9fb"></div>
<div class="lg" style="left:29px;top:179px;width:370px;white-space:nowrap">kube-apiserver/v1.15.12 (linux/amd64) kubernetes/e2a822d <b>(33710)</b></div>
<div class="b" style="left:390px;top:41px;width:21px;height:212px;background:#f1f1f1"></div>
<svg width="9" height="5" style="left:396px;top:50px" viewBox="0 0 9 5"><path d="M4.500 0L9 5H0z" fill="#a3a3a3"/></svg>
<div class="b" style="left:392px;top:62px;width:17px;height:150px;background:#c1c1c1"></div>
<svg width="9" height="5" style="left:396px;top:239px" viewBox="0 0 9 5"><path d="M0 0h9L4.500 5z" fill="#505050"/></svg>
<svg width="603" height="296" style="left:0;top:0"><path d="M511.30 96.30A69 69 0 0 1 560.21 213.97L543.63 197.46A45.6 45.6 0 0 0 511.30 119.70Z" fill="#e74c3c" stroke="#fff" stroke-width="1" stroke-linejoin="round"/><path d="M560.21 213.97A69 69 0 0 1 469.35 220.09L483.58 201.51A45.6 45.6 0 0 0 543.63 197.46Z" fill="#3276b8" stroke="#fff" stroke-width="1" stroke-linejoin="round"/><path d="M469.35 220.09A69 69 0 0 1 442.39 168.90L465.76 167.68A45.6 45.6 0 0 0 483.58 201.51Z" fill="#2ed573" stroke="#fff" stroke-width="1" stroke-linejoin="round"/><path d="M442.39 168.90A69 69 0 0 1 450.77 132.17L471.30 143.41A45.6 45.6 0 0 0 465.76 167.68Z" fill="#ed4c7c" stroke="#fff" stroke-width="1" stroke-linejoin="round"/><path d="M450.77 132.17A69 69 0 0 1 478.71 104.48L489.76 125.11A45.6 45.6 0 0 0 471.30 143.41Z" fill="#33d9fb" stroke="#fff" stroke-width="1" stroke-linejoin="round"/><path d="M478.71 104.48A69 69 0 0 1 495.32 98.18L500.74 120.94A45.6 45.6 0 0 0 489.76 125.11Z" fill="#b833fb" stroke="#fff" stroke-width="1" stroke-linejoin="round"/><path d="M495.32 98.18A69 69 0 0 1 503.00 96.80L505.81 120.03A45.6 45.6 0 0 0 500.74 120.94Z" fill="#ffff00" stroke="#fff" stroke-width="1" stroke-linejoin="round"/><path d="M503.00 96.80A69 69 0 0 1 506.45 96.47L508.09 119.81A45.6 45.6 0 0 0 505.81 120.03Z" fill="#74f72f" stroke="#fff" stroke-width="1" stroke-linejoin="round"/><path d="M506.45 96.47A69 69 0 0 1 509.05 96.34L509.81 119.72A45.6 45.6 0 0 0 508.09 119.81Z" fill="#ff7f00" stroke="#fff" stroke-width="1" stroke-linejoin="round"/><path d="M509.05 96.34A69 69 0 0 1 511.30 96.30L511.30 119.70A45.6 45.6 0 0 0 509.81 119.72Z" fill="#0088ff" stroke="#fff" stroke-width="1" stroke-linejoin="round"/><text x="470.5" y="129" fill="#333" font-size="11" text-anchor="middle" letter-spacing="0">9%</text><text x="455.5" y="157" fill="#333" font-size="11" text-anchor="middle" letter-spacing="0">9%</text></svg>
</div>
</body></html>
